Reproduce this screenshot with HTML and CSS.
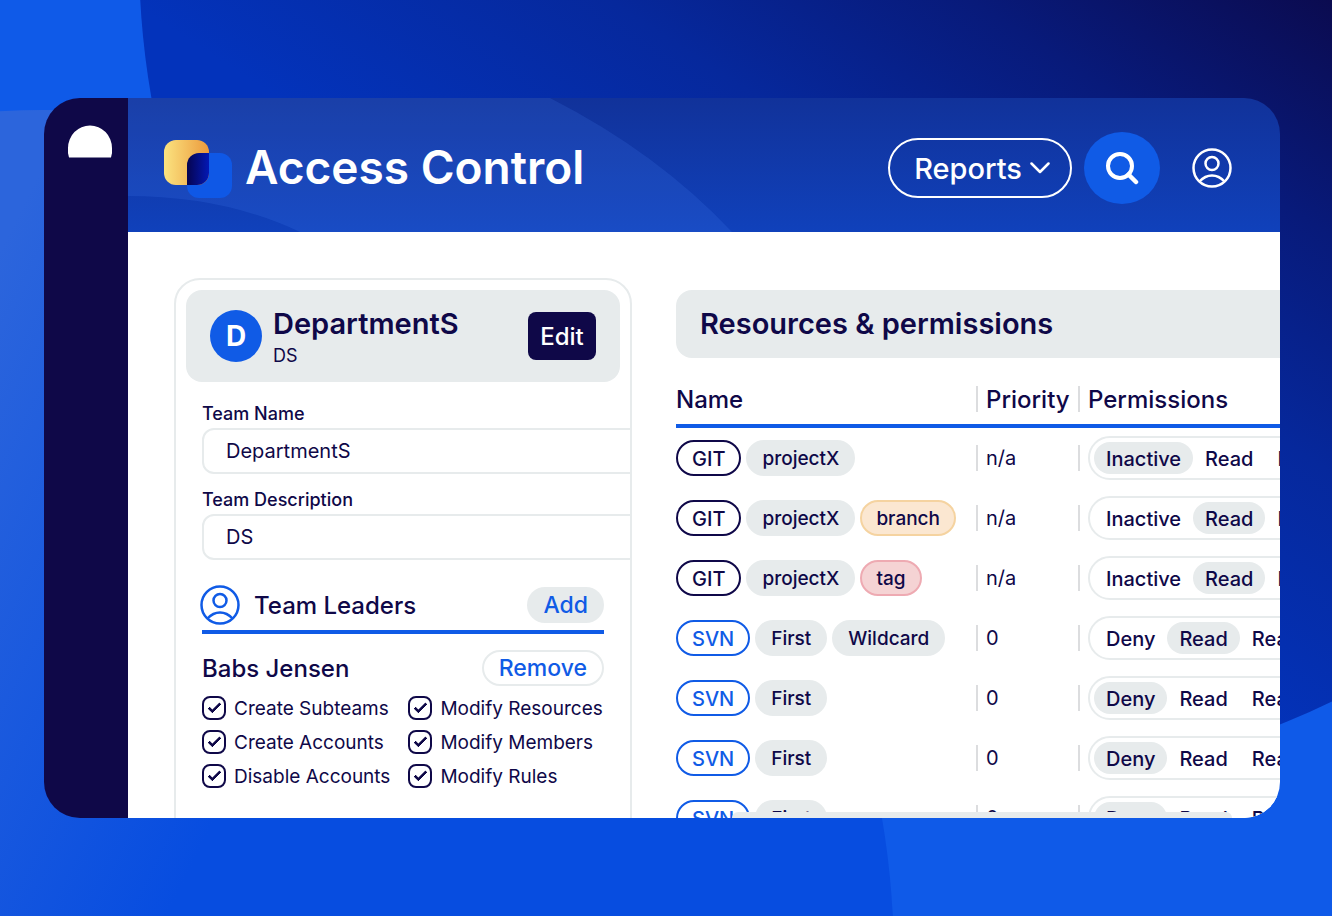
FILE: index.html
```html
<!DOCTYPE html>
<html lang="en">
<head>
<meta charset="utf-8">
<title>Access Control</title>
<link rel="stylesheet" href="styles.css">
</head>
<body>
<svg class="backdrop" viewBox="0 0 1332 916" preserveAspectRatio="none" aria-hidden="true">
  <defs>
    <linearGradient id="haze" gradientUnits="userSpaceOnUse" x1="0" y1="250" x2="400" y2="450">
      <stop offset="0" stop-color="#2c65dc"/><stop offset="1" stop-color="#074de0"/>
    </linearGradient>
    <linearGradient id="night" gradientUnits="userSpaceOnUse" x1="1332" y1="0" x2="971" y2="552">
      <stop offset="0" stop-color="#0b0b50"/><stop offset="0.3" stop-color="#081a7a"/><stop offset="0.6" stop-color="#06289c"/><stop offset="1" stop-color="#0333bb"/>
    </linearGradient>
  </defs>
  <rect width="1332" height="916" fill="#0f5ae8"/>
  <circle cx="44" cy="960" r="850" fill="url(#haze)"/>
  <circle cx="969" cy="-45" r="830" fill="url(#night)"/>
</svg>

<div class="window">
  <nav class="rail" aria-label="Main">
    <svg width="46" height="33" viewBox="0 0 46 33" aria-hidden="true"><path d="M2 32.500A22 22 0 0 1 1 23A22 22.500 0 0 1 45 23A22 22 0 0 1 44 32.500Z" fill="#fff"/></svg>
  </nav>
  <div class="screen">
    <header class="topbar">
      <svg class="topbar-art" viewBox="0 0 1152 134" preserveAspectRatio="xMinYMin slice" aria-hidden="true">
        <path d="M0 0H422Q530 55 604 134H172Q96 98 0 98Z" fill="#4f90ff" fill-opacity=".15"/>
      </svg>
      <div class="brand">
        <svg width="68" height="56" viewBox="0 0 68 56" overflow="visible" aria-hidden="true">
          <defs>
            <linearGradient id="gold"><stop offset="0" stop-color="#fbe380"/><stop offset="1" stop-color="#ec9a3c"/></linearGradient>
            <linearGradient id="ink"><stop offset="0" stop-color="#060450"/><stop offset="1" stop-color="#0318b5"/></linearGradient>
          </defs>
          <rect x="23" y="13" width="45" height="45" rx="12" fill="#0f58e6"/>
          <rect x="0" y="0" width="45" height="45" rx="12" fill="url(#gold)"/>
          <path d="M45 13V33A12 12 0 0 1 33 45H23V25A12 12 0 0 1 35 13Z" fill="url(#ink)"/>
        </svg>
        <h1>Access Control</h1>
      </div>
      <div class="tools">
        <button class="reports">Reports
          <svg width="20" height="12" viewBox="0 0 20 12" aria-hidden="true"><path d="M1.500 1.500L10 10L18.500 1.500" fill="none" stroke="#fff" stroke-width="2.500" stroke-linecap="round" stroke-linejoin="round"/></svg>
        </button>
        <button class="search" aria-label="Search">
          <svg width="34" height="34" viewBox="0 0 34 34" aria-hidden="true"><circle cx="15" cy="15" r="12" fill="none" stroke="#fff" stroke-width="4"/><path d="M23.500 23.500L31 31" stroke="#fff" stroke-width="4.500" stroke-linecap="round"/></svg>
        </button>
        <button class="account" aria-label="Account">
          <svg width="40" height="40" viewBox="0 0 40 40" fill="none" stroke="currentColor" stroke-width="2.500" aria-hidden="true"><circle cx="20" cy="20" r="18.500"/><circle cx="20" cy="15.500" r="6.500"/><path d="M7.500 33.500Q13 27.500 20 27.500Q27 27.500 32.500 33.500"/></svg>
        </button>
      </div>
    </header>

    <main class="content">
      <section class="team" aria-labelledby="team-title">
        <div class="team-head">
          <span class="avatar">D</span>
          <div class="team-id"><h2 id="team-title">DepartmentS</h2><p>DS</p></div>
          <button class="edit">Edit</button>
        </div>
        <div class="fields">
          <label for="name">Team Name</label>
          <input id="name" type="text" value="DepartmentS">
          <label for="desc">Team Description</label>
          <input id="desc" type="text" value="DS">
        </div>
        <div class="leaders">
          <div class="leaders-head">
            <svg width="40" height="40" viewBox="0 0 40 40" fill="none" stroke="currentColor" stroke-width="2.500" aria-hidden="true"><circle cx="20" cy="20" r="18.500"/><circle cx="20" cy="15.500" r="6.500"/><path d="M7.500 33.500Q13 27.500 20 27.500Q27 27.500 32.500 33.500"/></svg>
            <h3>Team Leaders</h3>
            <button class="add">Add</button>
          </div>
          <div class="member"><h4>Babs Jensen</h4><button class="remove">Remove</button></div>
          <div class="rights">
            <label><input type="checkbox" checked>Create Subteams</label>
            <label><input type="checkbox" checked>Modify Resources</label>
            <label><input type="checkbox" checked>Create Accounts</label>
            <label><input type="checkbox" checked>Modify Members</label>
            <label><input type="checkbox" checked>Disable Accounts</label>
            <label><input type="checkbox" checked>Modify Rules</label>
          </div>
        </div>
      </section>

      <section class="resources" aria-labelledby="res-title">
        <h2 id="res-title">Resources &amp; permissions</h2>
        <table>
          <thead><tr><th class="c-name"><span>Name</span></th><th class="c-prio"><span>Priority</span></th><th class="c-perm"><span>Permissions</span></th></tr></thead>
          <tbody>
            <tr><td><div class="tags"><b class="git">GIT</b><b>projectX</b></div></td><td class="c-prio"><span>n/a</span></td><td class="c-perm"><div class="line"><div class="seg"><label><input type="radio" name="p1" checked>Inactive</label><label><input type="radio" name="p1">Read</label><label><input type="radio" name="p1">Read/Write</label></div></div></td></tr>
            <tr><td><div class="tags"><b class="git">GIT</b><b>projectX</b><b class="branch">branch</b></div></td><td class="c-prio"><span>n/a</span></td><td class="c-perm"><div class="line"><div class="seg"><label><input type="radio" name="p2">Inactive</label><label><input type="radio" name="p2" checked>Read</label><label><input type="radio" name="p2">Read/Write</label></div></div></td></tr>
            <tr><td><div class="tags"><b class="git">GIT</b><b>projectX</b><b class="tag">tag</b></div></td><td class="c-prio"><span>n/a</span></td><td class="c-perm"><div class="line"><div class="seg"><label><input type="radio" name="p3">Inactive</label><label><input type="radio" name="p3" checked>Read</label><label><input type="radio" name="p3">Read/Write</label></div></div></td></tr>
            <tr><td><div class="tags"><b class="svn">SVN</b><b>First</b><b>Wildcard</b></div></td><td class="c-prio"><span>0</span></td><td class="c-perm"><div class="line"><div class="seg"><label><input type="radio" name="p4">Deny</label><label><input type="radio" name="p4" checked>Read</label><label><input type="radio" name="p4">Read/Write</label></div></div></td></tr>
            <tr><td><div class="tags"><b class="svn">SVN</b><b>First</b></div></td><td class="c-prio"><span>0</span></td><td class="c-perm"><div class="line"><div class="seg"><label><input type="radio" name="p5" checked>Deny</label><label><input type="radio" name="p5">Read</label><label><input type="radio" name="p5">Read/Write</label></div></div></td></tr>
            <tr><td><div class="tags"><b class="svn">SVN</b><b>First</b></div></td><td class="c-prio"><span>0</span></td><td class="c-perm"><div class="line"><div class="seg"><label><input type="radio" name="p6" checked>Deny</label><label><input type="radio" name="p6">Read</label><label><input type="radio" name="p6">Read/Write</label></div></div></td></tr>
            <tr><td><div class="tags"><b class="svn">SVN</b><b>First</b></div></td><td class="c-prio"><span>0</span></td><td class="c-perm"><div class="line"><div class="seg"><label><input type="radio" name="p7" checked>Deny</label><label><input type="radio" name="p7">Read</label><label><input type="radio" name="p7">Read/Write</label></div></div></td></tr>
          </tbody>
        </table>
      </section>
    </main>
    <div class="sheet"></div>
  </div>
</div>
</body>
</html>
```

FILE: styles.css
```css
* { box-sizing: border-box; margin: 0; }

:root {
  --ink: #0f0848;
  --blue: #105be6;
  --mist: #e7ebec;
}

body {
  height: 100vh;
  padding: 98px 52px 98px 44px;
  overflow: hidden;
  font-family: Inter, "Liberation Sans", sans-serif;
  font-size: 20px;
  color: var(--ink);
}

button, input { font: inherit; color: inherit; }
button { border: 0; padding: 0; cursor: pointer; }

.backdrop { position: absolute; inset: 0; width: 100%; height: 100%; z-index: -1; }

.window {
  display: flex;
  height: 100%;
  border-radius: 36px;
  overflow: hidden;
}

.rail {
  flex: 0 0 84px;
  padding: 27px 0 0 23px;
  background: var(--ink);
}

.screen {
  position: relative;
  flex: 1;
  min-width: 0;
  display: flex;
  flex-direction: column;
}

.topbar {
  position: relative;
  flex: 0 0 134px;
  display: flex;
  align-items: center;
  justify-content: space-between;
  padding: 6px 48px 0 36px;
  background: linear-gradient(#11329a, #1041bb);
  color: #fff;
}

.topbar-art { position: absolute; inset: 0; width: 100%; height: 100%; }

.brand, .tools { position: relative; display: flex; align-items: center; }
.brand { gap: 13px; }
h1 { padding-bottom: 2px; font-size: 46px; line-height: 56px; font-weight: 600; }

.reports {
  display: flex;
  align-items: center;
  gap: 8px;
  height: 60px;
  padding: 0 20px 0 24px;
  border: 2px solid #fff;
  border-radius: 30px;
  background: none;
  font-size: 29px;
  font-weight: 500;
}

.search {
  display: grid;
  place-items: center;
  width: 76px;
  height: 72px;
  margin: 0 32px 0 12px;
  border-radius: 50%;
  background: var(--blue);
}

.account { height: 40px; background: none; }

.content {
  flex: 1;
  min-height: 0;
  display: flex;
  align-items: flex-start;
  gap: 44px;
  padding: 46px 0 0 46px;
  background: #fff;
  overflow: hidden;
}

.team {
  flex: 0 0 458px;
  min-height: 600px;
  padding: 10px;
  border: 2px solid var(--mist);
  border-radius: 26px;
  overflow: hidden;
}

.team-head {
  display: flex;
  align-items: center;
  gap: 11px;
  height: 92px;
  padding: 0 24px;
  border-radius: 16px;
  background: var(--mist);
}

.avatar {
  display: grid;
  place-items: center;
  width: 52px;
  height: 52px;
  border-radius: 50%;
  background: var(--blue);
  color: #fff;
  font-size: 28px;
  font-weight: 700;
}

.team-id { flex: 1; padding-top: 3px; }
h2 { font-size: 29px; line-height: 36px; font-weight: 600; }
.team-id p { font-size: 18px; line-height: 28px; }

.edit {
  width: 68px;
  height: 48px;
  border-radius: 8px;
  background: var(--ink);
  color: #fff;
  font-size: 24px;
  font-weight: 500;
}

.fields { padding: 20px 0 0 16px; font-size: 18px; font-weight: 500; }
.fields label { display: block; line-height: 24px; }

.fields input {
  display: block;
  width: 460px;
  height: 46px;
  margin: 2px 0 14px;
  padding: 0 22px;
  border: 2px solid var(--mist);
  border-radius: 12px;
  background: #fff;
  font-size: 20px;
  font-weight: 400;
}

.leaders { padding: 10px 16px; }

.leaders-head {
  display: flex;
  align-items: center;
  height: 50px;
  padding-bottom: 4px;
  border-bottom: 4px solid var(--blue);
}

.leaders-head svg { margin-left: -2px; color: var(--blue); }
h3, h4 { flex: 1; font-size: 24px; font-weight: 500; }
h3 { margin-left: 14px; }

.add, .remove {
  height: 36px;
  padding: 0 16px;
  border-radius: 18px;
  background: var(--mist);
  color: var(--blue);
  font-size: 23px;
  font-weight: 500;
}

.remove { padding: 0 15px; border: 2px solid var(--mist); background: #fff; }
.member { display: flex; align-items: center; margin: 16px 0 10px; }

.rights {
  display: grid;
  grid-template-columns: max-content max-content;
  gap: 10px 18px;
  font-size: 19px;
}

.rights label { display: flex; gap: 8px; line-height: 26px; height: 24px; white-space: nowrap; }

.rights input {
  appearance: none;
  display: grid;
  place-items: center;
  width: 24px;
  height: 24px;
  margin: 0;
  border: 2px solid var(--ink);
  border-radius: 8px;
}

.rights input:checked::before {
  content: "";
  width: 10px;
  height: 4px;
  margin-bottom: 3px;
  border: solid var(--ink);
  border-width: 0 0 3px 3px;
  border-radius: 1px;
  rotate: -45deg;
}

.resources { flex: 1; min-width: 0; padding-top: 12px; overflow: hidden; }

.resources h2 {
  height: 68px;
  padding-left: 24px;
  border-radius: 16px 0 0 16px;
  background: var(--mist);
  line-height: 68px;
}

table { width: 100%; margin-top: 22px; border-spacing: 0; table-layout: fixed; }
th, td { padding: 0; text-align: left; }

th {
  height: 48px;
  padding-bottom: 6px;
  border-bottom: 4px solid var(--blue);
  font-size: 24px;
  font-weight: 500;
}

th span { display: block; height: 26px; line-height: 28px; }
td { height: 60px; }
.c-name { width: 300px; }
.c-prio { width: 102px; }
.c-prio span, th.c-perm span, .line { border-left: 2px solid #dcdddf; }
.c-prio span, th.c-perm span { display: block; height: 26px; padding-left: 8px; }
td.c-prio span { line-height: 26px; }
.line { display: flex; align-items: center; height: 26px; padding-left: 8px; }

.tags { display: flex; gap: 5px; }

.tags b {
  height: 36px;
  padding: 0 14px;
  border: 2px solid var(--mist);
  border-radius: 18px;
  background: var(--mist);
  font-size: 19px;
  font-weight: 500;
  line-height: 34px;
}

.tags .git, .tags .svn { background: #fff; font-size: 20px; }
.tags .git { border-color: var(--ink); }
.tags .svn { border-color: var(--blue); color: var(--blue); }
.tags .branch { border-color: #f5d3a0; background: #fbe7d1; }
.tags .tag { border-color: #eeaab2; background: #f5d3d4; }

.seg {
  flex: none;
  display: flex;
  height: 44px;
  padding: 4px;
  border: 2px solid var(--mist);
  border-radius: 22px;
  background: #fff;
  font-weight: 500;
}

.seg label { height: 32px; padding: 0 12px; border-radius: 16px; line-height: 34px; cursor: pointer; }
.seg label:has(:checked) { background: var(--mist); }
.seg input { position: absolute; opacity: 0; pointer-events: none; }

.sheet {
  position: absolute;
  left: 604px;
  right: 48px;
  bottom: 0;
  height: 6px;
  border-radius: 8px 8px 0 0;
  background: var(--mist);
}
```
